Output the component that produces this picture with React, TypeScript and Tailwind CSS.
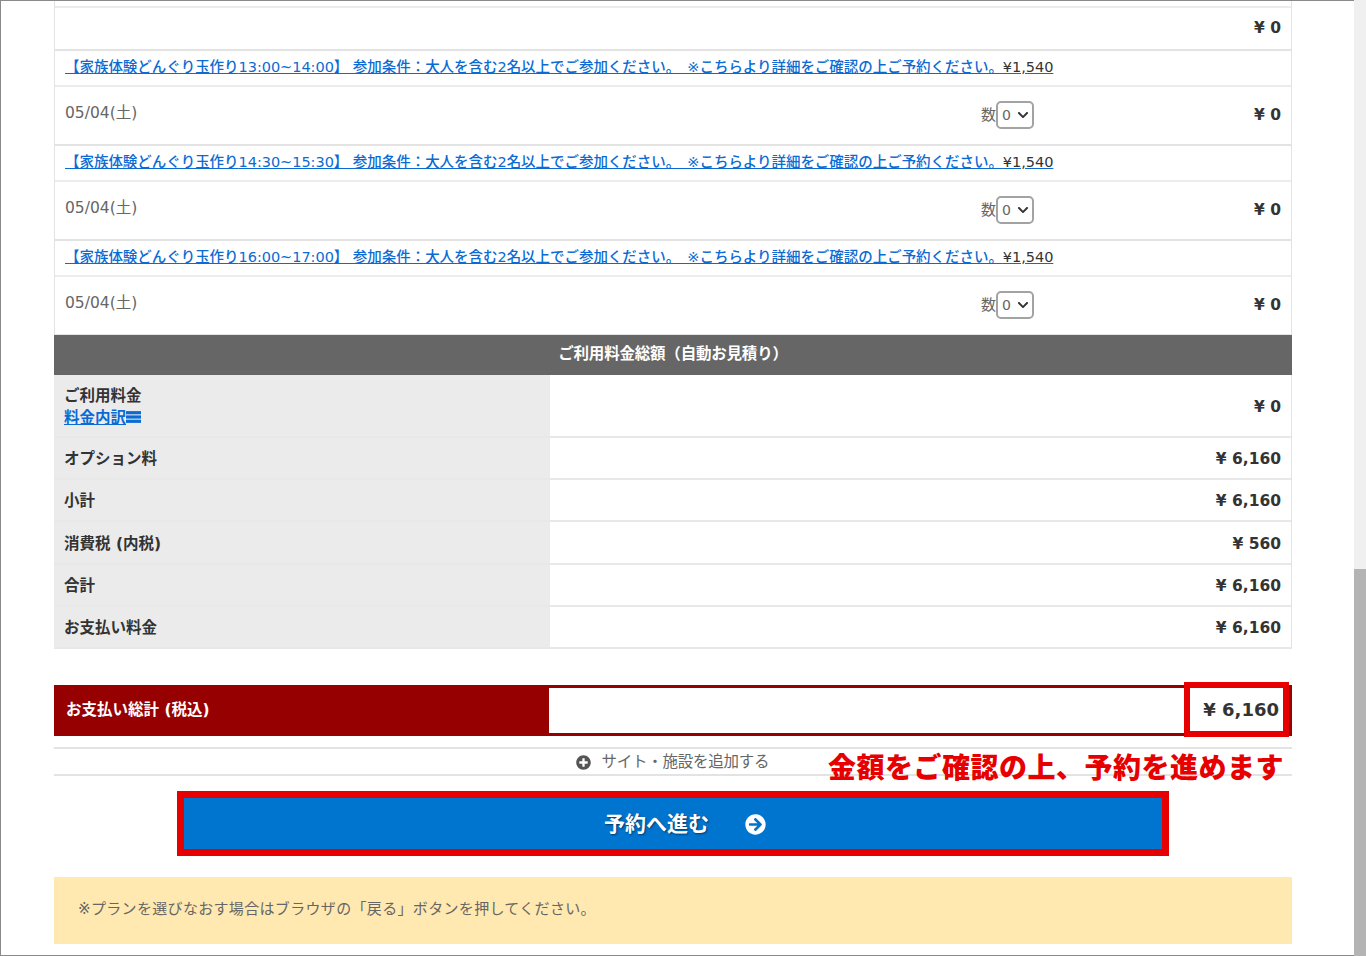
import React from 'react';
import { FaArrowCircleRight, FaChevronDown, FaPlusCircle } from 'react-icons/fa';

const jp = { fontFamily: '"DejaVu Sans", "Noto Sans CJK JP", sans-serif' };

const plans = ['13:00~14:00', '14:30~15:30', '16:00~17:00'];

const summary = [
  { label: 'オプション料', value: '¥ 6,160', h: 'h-[42px]' },
  { label: '小計', value: '¥ 6,160', h: 'h-[42px]' },
  { label: '消費税 (内税)', value: '¥ 560', h: 'h-[43px]' },
  { label: '合計', value: '¥ 6,160', h: 'h-[42px]' },
  { label: 'お支払い料金', value: '¥ 6,160', h: 'h-[42px]' },
];

const PlanRows: React.FC<{ time: string }> = ({ time }) => (
  <div>
    <div className="h-[36px] border-t-2 border-[#e3e3e3] pl-[10px] pt-[4px] leading-[23px] whitespace-nowrap">
      <a href="#" className="text-[14.5px] font-medium text-[#0b6bd3] underline tracking-[-0.04px]">
        【家族体験どんぐり玉作り{time}】 参加条件：大人を含む2名以上でご参加ください。　※こちらより詳細をご確認の上ご予約ください。
        <span className="text-[#333]">¥1,540</span>
      </a>
    </div>
    <div className="h-[59px] border-t-2 border-[#ececec] flex pl-[10px] pr-[10px]">
      <span className="text-[#666] text-[15.5px] mt-[15px] leading-[22px]">05/04(土)</span>
      <div className="ml-auto flex items-start">
        <div className="flex items-center mt-[14px] mr-[220px]">
          <span className="text-[#666] text-[15px]">数</span>
          <div className="relative">
            <select
              defaultValue="0"
              className="block appearance-none w-[38px] h-[28px] bg-white border-2 border-[#a3a3a3] rounded-[5px] text-[14px] text-[#666] pl-[4px]"
            >
              <option value="0">0</option>
              <option value="1">1</option>
            </select>
            <FaChevronDown className="absolute right-[5px] top-[8px] text-[12px] text-[#333]" />
          </div>
        </div>
        <span className="text-[#333] text-[15.5px] font-bold mt-[16px] leading-[24px]">¥ 0</span>
      </div>
    </div>
  </div>
);

const App: React.FC = () => {
  return (
    <div className="h-[956px] w-[1366px] overflow-hidden flex bg-white" style={jp}>
      <main className="w-[1354px] h-[956px] border-t border-b border-l border-[#8a8a8a] pl-[53px] relative">
        <div className="w-[1238px] border-x border-b border-[#e3e3e3]">
          <div className="h-[48px] pt-[5px]">
            <div className="h-[43px] border-t-2 border-[#ececec] flex justify-end items-center pr-[10px]">
              <span className="text-[#333] text-[15.5px] font-bold">¥ 0</span>
            </div>
          </div>
          {plans.map((t) => (
            <PlanRows key={t} time={t} />
          ))}
        </div>

        <div className="w-[1238px] h-[40px] bg-[#666] text-white text-[15.5px] font-bold flex items-center justify-center tracking-[-0.2px]">
          ご利用料金総額（自動お見積り）
        </div>

        <div className="w-[1238px] border-r border-[#e3e3e3]">
          <div className="flex h-[63px] border-b-2 border-[#e8e8e8]">
            <div className="w-[496px] bg-[#ebebeb] pl-[10px] pt-[10px] text-[15.5px] font-bold text-[#333] leading-[22px]">
              ご利用料金
              <br />
              <a href="#" className="text-[#0b6bd3] underline">料金内訳</a>
              <svg viewBox="0 0 14 13" className="inline w-[15px] h-[14px] align-[-1px] fill-[#0b6bd3]">
                <rect x="0" y="1" width="14" height="3" />
                <rect x="0" y="5" width="14" height="3" />
                <rect x="0" y="9" width="14" height="3" />
              </svg>
            </div>
            <div className="flex-1 flex items-center justify-end pr-[10px] pt-[4px] text-[#333] text-[15.5px] font-bold">¥ 0</div>
          </div>
          {summary.map((row) => (
            <div key={row.label} className={`flex ${row.h} border-b-2 border-[#e8e8e8]`}>
              <div className="w-[496px] bg-[#ebebeb] pl-[10px] pt-[4px] flex items-center text-[15.5px] font-bold text-[#333]">
                {row.label}
              </div>
              <div className="flex-1 flex items-center justify-end pr-[10px] pt-[4px] text-[#333] text-[15.5px] font-bold">
                {row.value}
              </div>
            </div>
          ))}
        </div>

        <div className="w-[1238px] h-[51px] mt-[36px] bg-[#970000] flex p-[3px] pl-0 items-stretch">
          <div className="w-[495px] pl-[12px] flex items-center text-white text-[15.5px] font-bold">
            お支払い総計 (税込)
          </div>
          <div className="flex-1 bg-white flex items-center justify-end pr-[10px] pb-[2px] text-[#333] text-[18px] font-bold">
            ¥ 6,160
          </div>
        </div>

        <div className="w-[1238px] h-[29px] mt-[11px] border-y-2 border-[#e3e3e3] flex items-center justify-center pr-[1px] pt-[2px] text-[15.5px] text-[#666] tracking-[-0.25px]">
          <FaPlusCircle className="text-[#555] text-[15px] mr-[11px]" />
          サイト・施設を追加する
        </div>

        <div className="w-[992px] h-[65px] mt-[15px] ml-[123px] border-[7px] border-[#e60000] bg-[#0075cf] flex items-center justify-center pl-[24px] pt-[2px] text-white text-[21px] font-bold [text-shadow:1px_1px_2px_#00000080]">
          予約へ進む
          <FaArrowCircleRight className="text-[21px] ml-[36px]" />
        </div>

        <div className="w-[1238px] h-[67px] mt-[21px] bg-[#ffe9b0] flex items-center pl-[24px] pb-[2px] text-[15px] text-[#666] tracking-[0.33px]">
          ※プランを選びなおす場合はブラウザの「戻る」ボタンを押してください。
        </div>

        {/* annotations on top of the screenshot */}
        <div className="absolute left-[1183px] top-[681px] w-[105px] h-[55px] border-[6px] border-[#e60000]" />
        <div className="absolute left-[827px] top-[750px] text-[#e60000] text-[28px] font-black leading-[36px] whitespace-nowrap tracking-[0.5px]">
          金額をご確認の上、予約を進めます
        </div>
      </main>
      <aside className="flex-1 bg-[#f0f0f0] flex flex-col">
        <div className="h-[569px]" />
        <div className="flex-1 bg-[#b4b4b4]" />
      </aside>
    </div>
  );
};

export default App;
